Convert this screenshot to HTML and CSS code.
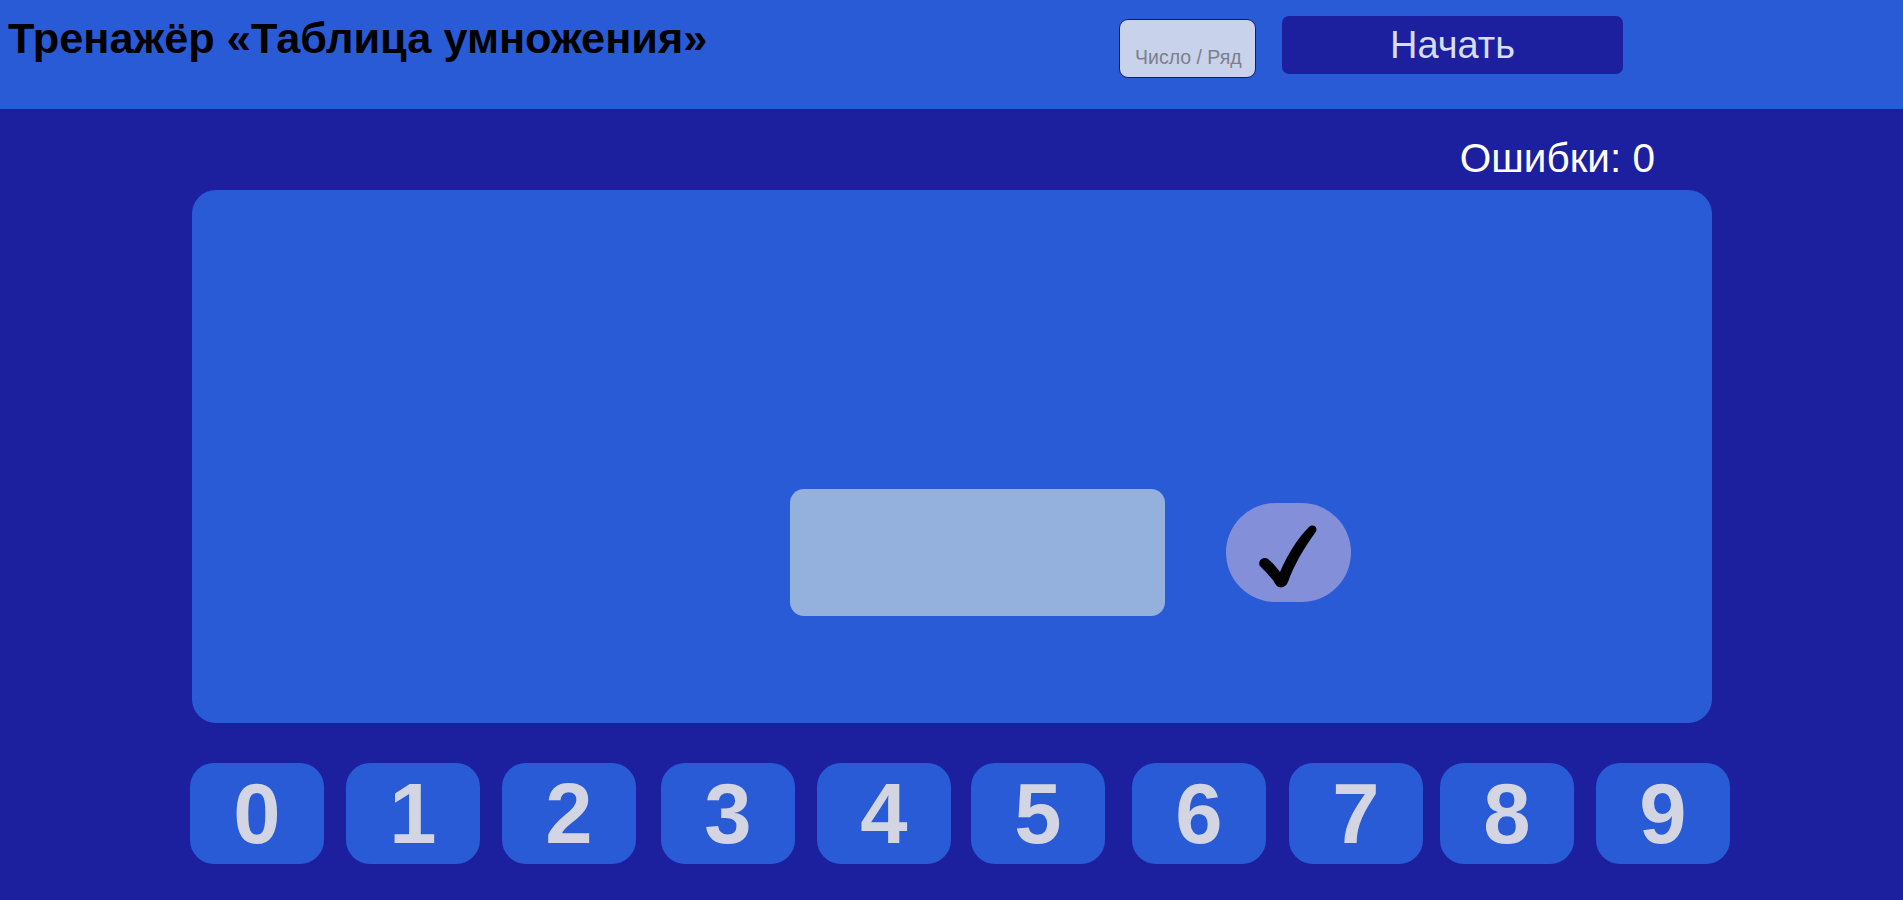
FILE: index.html
```html
<!DOCTYPE html>
<html lang="ru">
<head>
  <meta charset="UTF-8" />
  <meta name="viewport" content="width=device-width, initial-scale=1.0" />
  <title>Тренажёр «Таблица умножения»</title>
  <link rel="stylesheet" href="styles.css">
</head>
<body>
  <header class="top-bar">
    <h1 class="title">Тренажёр «Таблица умножения»</h1>
    <div class="controls">
      <input class="number-input" type="text" placeholder="Число / Ряд">
      <button class="start-button">Начать</button>
    </div>
  </header>

  <div class="errors">Ошибки: 0</div>

  <main class="board">
    <input class="answer" type="text">
    <button class="check-button" aria-label="Проверить">
      <svg class="check-icon" viewBox="0 0 70 70" width="70" height="70">
        <path d="M5.5 47.5 C4 41.5 10 38.5 14 41 C19 45 23 50 26 54 C33 38 42 22 55 9 C59 5.5 64 9 62 13.5 C50 30 40 47 34 64 C32 70 25 71 22 67 C18 60 12 54 5.5 47.5 Z" />
      </svg>
    </button>
  </main>

  <div class="digits">
    <button class="digit">0</button>
    <button class="digit">1</button>
    <button class="digit">2</button>
    <button class="digit">3</button>
    <button class="digit">4</button>
    <button class="digit">5</button>
    <button class="digit">6</button>
    <button class="digit">7</button>
    <button class="digit">8</button>
    <button class="digit">9</button>
  </div>
</body>
</html>
```

FILE: styles.css
```css
* {
  box-sizing: border-box;
}
body {
  font-family: "Liberation Sans", Arial, sans-serif;
  background-color: #1c209e;
  margin: 0;
  min-height: 100vh;
}
button,
input {
  font-family: inherit;
}
.top-bar {
  display: flex;
  justify-content: space-between;
  height: 109px;
  padding: 14px 280px 0 8px;
  background-color: #2a5bd7;
}
.title {
  margin: 0;
  font-size: 43.3px;
  line-height: 48px;
  color: #000;
}
.controls {
  display: flex;
  align-items: flex-start;
  gap: 26px;
  padding-top: 2px;
}
.number-input {
  width: 137px;
  height: 59px;
  margin-top: 3px;
  padding: 17px 0 0 15px;
  font-size: 19.5px;
  background-color: #c8d2ea;
  border: 1.5px solid #141a66;
  border-radius: 9px;
}
.number-input::placeholder {
  color: #7c7f8c;
}
.start-button {
  width: 341px;
  height: 58px;
  font-size: 38px;
  color: #d8dcf5;
  background-color: #1c209e;
  border: none;
  border-radius: 7px;
}
.errors {
  height: 81px;
  padding: 17px 248px 0 0;
  display: flex;
  align-items: center;
  justify-content: flex-end;
  font-size: 40.5px;
  color: #fff;
}
.board {
  display: flex;
  align-items: center;
  gap: 61px;
  width: 1520px;
  height: 533px;
  margin-left: 192px;
  padding: 299px 0 107px 598px;
  background-color: #2a5bd7;
  border-radius: 24px;
}
.answer {
  width: 375px;
  height: 127px;
  background-color: #93b1dc;
  border: none;
  border-radius: 14px;
}
.check-button {
  display: flex;
  align-items: center;
  justify-content: center;
  width: 125px;
  height: 99px;
  padding: 0;
  background-color: #8390d9;
  border: none;
  border-radius: 50px;
}
.check-icon {
  fill: #000;
}
.digits {
  display: flex;
  margin: 40px 0 0 190px;
}
.digit {
  width: 134px;
  height: 101px;
  padding: 0;
  font-size: 85px;
  font-weight: bold;
  color: #d3d6e2;
  background-color: #2a5bd7;
  border: none;
  border-radius: 24px;
}
/* the gaps between keys are not even */
.digit:nth-child(2) { margin-left: 22px; }
.digit:nth-child(3) { margin-left: 22px; }
.digit:nth-child(4) { margin-left: 25px; }
.digit:nth-child(5) { margin-left: 22px; }
.digit:nth-child(6) { margin-left: 20px; }
.digit:nth-child(7) { margin-left: 27px; }
.digit:nth-child(8) { margin-left: 23px; }
.digit:nth-child(9) { margin-left: 17px; }
.digit:nth-child(10) { margin-left: 22px; }
```
